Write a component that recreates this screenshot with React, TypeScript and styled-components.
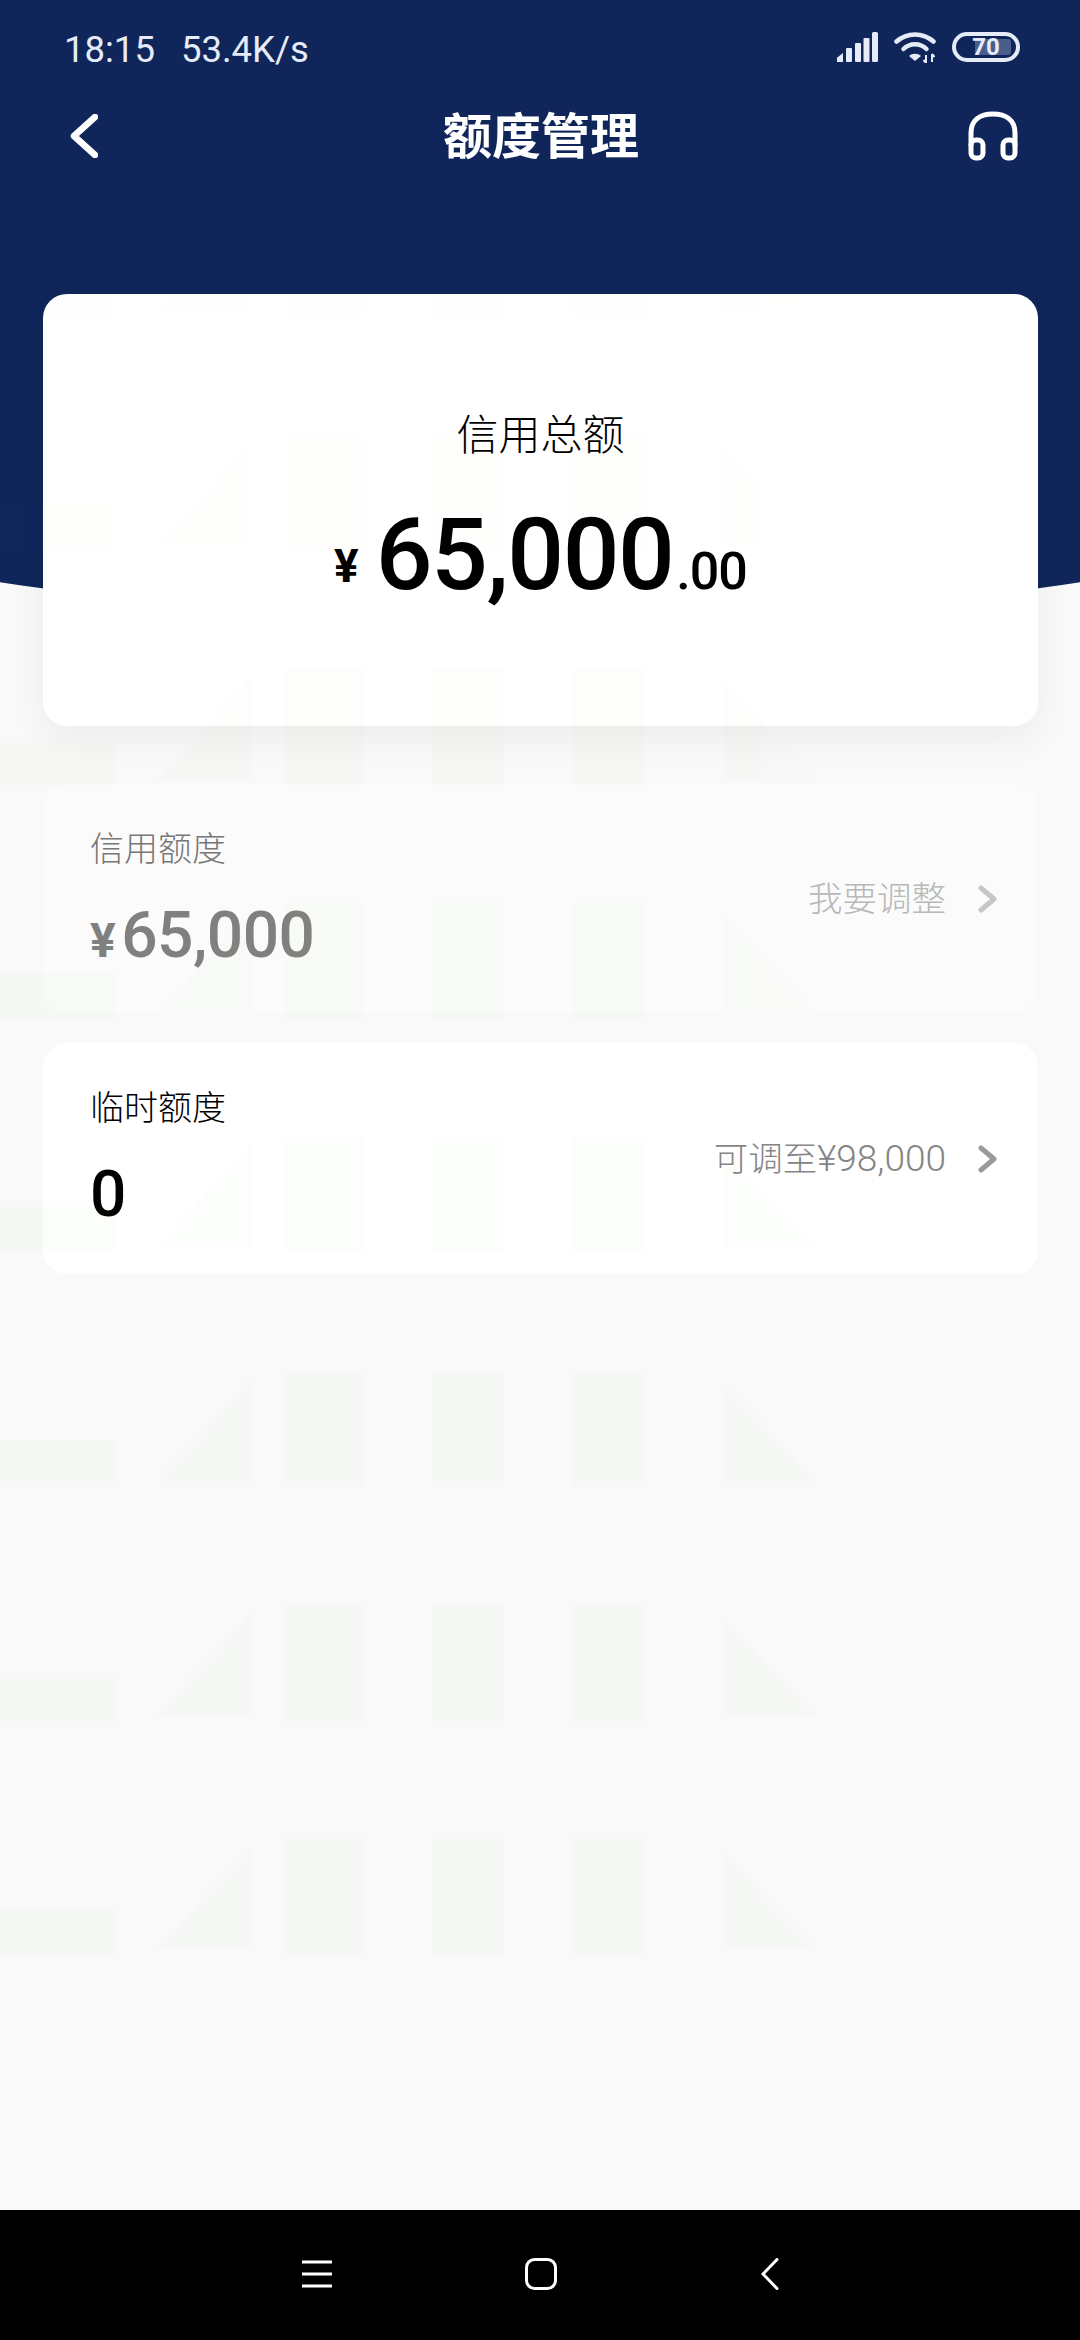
import React from "react";
import styled, { createGlobalStyle } from "styled-components";

const Global = createGlobalStyle`
  html, body { margin: 0; padding: 0; background: #000; }
  * { box-sizing: border-box; }
`;

const FONT = `Roboto, "Noto Sans CJK SC", sans-serif`;
const NAVY = "#10265a";

const Page = styled.div`
  position: relative;
  width: 1080px;
  height: 2340px;
  display: flex;
  flex-direction: column;
  overflow: hidden;
  font-family: ${FONT};
  background: #f9f9f9;
`;

const Main = styled.main`
  position: relative;
  flex: 1;
  display: flex;
  flex-direction: column;
`;

const Header = styled.header`
  position: relative;
  height: 294px;
  background: ${NAVY};
  color: #fff;
  &::after {
    content: "";
    position: absolute;
    left: 0;
    right: 0;
    top: 294px;
    height: 327px;
    background: ${NAVY};
    clip-path: ellipse(1080px 290px at 50% 37px);
  }
`;

const StatusBar = styled.div`
  height: 98px;
  padding: 0 60px 0 64px;
  display: flex;
  align-items: center;
  justify-content: space-between;
  color: #e6ecf7;
  font-size: 36.5px;
`;

const StatusText = styled.div`
  display: flex;
  gap: 26px;
`;

const StatusIcons = styled.div`
  display: flex;
  align-items: center;
  gap: 16px;
  margin-top: -4px;
`;

const Battery = styled.div`
  position: relative;
  width: 68px;
  height: 30px;
  border: 4px solid #e6ecf7;
  border-radius: 15px;
  display: flex;
  align-items: center;
  justify-content: center;
  font-size: 24px;
  font-weight: 700;
  color: #e6ecf7;
  &::before {
    content: "";
    position: absolute;
    left: 3px;
    top: 3px;
    bottom: 3px;
    width: 52px;
    border-radius: 8px 3px 3px 8px;
    background: linear-gradient(90deg, transparent 0 30%, #4a5d8d 30%);
  }
`;

const BatteryLabel = styled.span`
  position: relative;
`;

const NavBar = styled.div`
  height: 76px;
  padding: 0 62px 0 70px;
  display: grid;
  grid-template-columns: 1fr auto 1fr;
  align-items: center;
`;

const NavSide = styled.div<{ $end?: boolean }>`
  display: flex;
  margin-top: -3px;
  justify-content: ${(p) => (p.$end ? "flex-end" : "flex-start")};
`;

const Title = styled.h1`
  margin: 2px 6px 0 0;
  font-size: 49px;
  font-weight: 700;
  line-height: 76px;
  color: #fff;
`;

const Content = styled.div`
  position: relative;
  z-index: 1;
  padding: 0 42px 0 43px;
  display: flex;
  flex-direction: column;
`;

const HeroCard = styled.section`
  height: 432px;
  border-radius: 24px;
  background: #fff;
  box-shadow: 0 14px 36px rgba(0, 0, 0, 0.05);
  display: flex;
  flex-direction: column;
  align-items: center;
  padding-top: 117px;
  margin-bottom: 58px;
`;

const HeroLabel = styled.div`
  font-size: 42px;
  line-height: 50px;
  font-weight: 300;
  color: #000;
`;

const HeroAmount = styled.div`
  display: flex;
  align-items: baseline;
  margin-top: 36px;
  color: #000;
  line-height: 116px;
`;

const HeroYen = styled.span`
  font-size: 46px;
  font-weight: 700;
  margin-right: 17px;
  transform: translateY(-7px);
`;

const HeroValue = styled.span`
  font-size: 100px;
  font-weight: 500;
  letter-spacing: -1.5px;
`;

const HeroCents = styled.span`
  font-size: 52px;
  font-weight: 500;
  letter-spacing: -1px;
  margin-left: 3px;
`;

const LimitCard = styled.section<{ $muted?: boolean }>`
  height: ${(p) => (p.$muted ? 229 : 231)}px;
  border-radius: 24px;
  background: ${(p) => (p.$muted ? "rgba(255,255,255,0.35)" : "#fff")};
  padding: 0 40px 0 47px;
  display: flex;
  align-items: center;
  justify-content: space-between;
  margin-bottom: 30px;
`;

const LimitInfo = styled.div`
  align-self: flex-start;
  margin-top: 43px;
  display: flex;
  flex-direction: column;
`;

const LimitLabel = styled.div<{ $muted?: boolean }>`
  font-size: 34px;
  line-height: 44px;
  font-weight: 300;
  color: ${(p) => (p.$muted ? "#777777" : "#000")};
`;

const LimitValue = styled.div<{ $muted?: boolean }>`
  display: flex;
  align-items: baseline;
  margin-top: 29px;
  line-height: 72px;
  font-size: 64px;
  font-weight: 500;
  letter-spacing: -0.5px;
  color: ${(p) => (p.$muted ? "#808080" : "#000")};
`;

const LimitYen = styled.span`
  font-size: 48px;
  font-weight: 700;
  margin-right: 6px;
`;

const LimitAction = styled.div<{ $muted?: boolean }>`
  display: flex;
  align-items: center;
  gap: 32px;
  font-size: 34.5px;
  line-height: 44px;
  font-weight: 300;
  color: ${(p) => (p.$muted ? "#b8b8b8" : "#858585")};
`;

const ActionNumber = styled.span`
  font-size: 37px;
`;

const Watermark = styled.svg`
  position: absolute;
  left: 0;
  top: 0;
  width: 1080px;
  height: 2210px;
  z-index: 2;
  pointer-events: none;
`;

const BottomNav = styled.nav`
  position: relative;
  z-index: 3;
  height: 130px;
  background: #000;
  display: flex;
  align-items: center;
  padding: 0 0 2px 302px;
  gap: 193px;
`;

const BackSlot = styled.div`
  display: flex;
  margin-left: 11px;
`;

const rows: [number, number][] = [
  [201, 0.15],
  [435, 0.3],
  [669, 0.5],
  [903, 0.7],
  [1137, 0.85],
  [1371, 1],
  [1605, 1],
  [1839, 1],
];

const WatermarkLayer = () => (
  <Watermark viewBox="0 0 1080 2210">
    {rows.map(([y, o]) => (
      <g key={y} transform={`translate(0 ${y})`} fill="rgba(149,216,116,0.03)" opacity={o}>
        <rect x="0" y="69" width="114" height="47" />
        <path d="M158 110 L251 7 V110 Z" />
        <rect x="286" y="0" width="79" height="116" />
        <rect x="432" y="0" width="72" height="116" />
        <rect x="572" y="0" width="74" height="116" />
        <path d="M723 12 L816 110 H723 Z" />
      </g>
    ))}
  </Watermark>
);

const SignalIcon = () => (
  <svg width="41" height="30" viewBox="0 0 41 30" fill="#e6ecf7">
    <path d="M0 30 V26 Q0 25 1 25 L6 21 V30 Z" />
    <rect x="9" y="16" width="6" height="14" rx="1" />
    <rect x="18" y="11" width="6" height="19" rx="1" />
    <rect x="26.5" y="6" width="6" height="24" rx="1" />
    <rect x="35" y="0" width="6" height="30" rx="1.5" />
  </svg>
);

const WifiIcon = () => (
  <svg width="42" height="32" viewBox="0 0 42 32" fill="none" stroke="#e6ecf7" strokeLinecap="round">
    <path d="M2.5 10.5 C13 1 29 1 39.5 10.5" strokeWidth="4.5" />
    <path d="M9.5 18 C16 11.5 26 11.5 32.5 18" strokeWidth="4.5" />
    <path d="M15 25 C18 22 24 22 27 25 L21 30 Z" fill="#e6ecf7" stroke="none" />
    <path d="M32 24 V32 M29.5 29 L32 32 M38 23 V31 M38 23 L40.5 26" strokeWidth="2" strokeLinecap="butt" />
  </svg>
);

const BackIcon = () => (
  <svg width="28" height="44" viewBox="0 0 28 44" fill="none" stroke="#fff" strokeWidth="6.5" strokeLinecap="round" strokeLinejoin="round">
    <path d="M25 3 L4 22 L25 41" />
  </svg>
);

const HeadsetIcon = () => (
  <svg width="50" height="50" viewBox="0 0 50 50" fill="none" stroke="#fff" strokeWidth="5" strokeLinejoin="round">
    <path d="M3 35 V22 C3 9 12 3 25 3 C38 3 47 9 47 22 V35" />
    <rect x="3" y="29" width="12" height="18" rx="5" />
    <rect x="35" y="29" width="12" height="18" rx="5" />
  </svg>
);

const ChevronIcon = ({ color }: { color: string }) => (
  <svg width="20" height="28" viewBox="0 0 20 28" fill="none" stroke={color} strokeWidth="5" strokeLinecap="round" strokeLinejoin="round">
    <path d="M3 3 L16 14 L3 25" />
  </svg>
);

const MenuIcon = () => (
  <svg width="30" height="28" viewBox="0 0 30 28" fill="none" stroke="#fff" strokeWidth="3">
    <path d="M0 2 H30 M0 14 H30 M0 26 H30" />
  </svg>
);

const HomeIcon = () => (
  <svg width="32" height="32" viewBox="0 0 32 32" fill="none" stroke="#fff" strokeWidth="3">
    <rect x="1.5" y="1.5" width="29" height="29" rx="8" />
  </svg>
);

const SysBackIcon = () => (
  <svg width="18" height="32" viewBox="0 0 18 32" fill="none" stroke="#fff" strokeWidth="3" strokeLinecap="round">
    <path d="M16 1.5 L2 16 L16 30.5" />
  </svg>
);

export default function App() {
  return (
    <Page>
      <Global />
      <Main>
        <Header>
          <StatusBar>
            <StatusText>
              <span>18:15</span>
              <span>53.4K/s</span>
            </StatusText>
            <StatusIcons>
              <SignalIcon />
              <WifiIcon />
              <Battery>
                <BatteryLabel>70</BatteryLabel>
              </Battery>
            </StatusIcons>
          </StatusBar>
          <NavBar>
            <NavSide>
              <BackIcon />
            </NavSide>
            <Title>额度管理</Title>
            <NavSide $end>
              <HeadsetIcon />
            </NavSide>
          </NavBar>
        </Header>
        <Content>
          <HeroCard>
            <HeroLabel>信用总额</HeroLabel>
            <HeroAmount>
              <HeroYen>¥</HeroYen>
              <HeroValue>65,000</HeroValue>
              <HeroCents>.00</HeroCents>
            </HeroAmount>
          </HeroCard>
          <LimitCard $muted>
            <LimitInfo>
              <LimitLabel $muted>信用额度</LimitLabel>
              <LimitValue $muted>
                <LimitYen>¥</LimitYen>
                65,000
              </LimitValue>
            </LimitInfo>
            <LimitAction $muted>
              <span>我要调整</span>
              <ChevronIcon color="#c6c6c6" />
            </LimitAction>
          </LimitCard>
          <LimitCard>
            <LimitInfo>
              <LimitLabel>临时额度</LimitLabel>
              <LimitValue>0</LimitValue>
            </LimitInfo>
            <LimitAction>
              <span>
                可调至<ActionNumber>¥98,000</ActionNumber>
              </span>
              <ChevronIcon color="#999999" />
            </LimitAction>
          </LimitCard>
        </Content>
        <WatermarkLayer />
      </Main>
      <BottomNav>
        <MenuIcon />
        <HomeIcon />
        <BackSlot>
          <SysBackIcon />
        </BackSlot>
      </BottomNav>
    </Page>
  );
}
